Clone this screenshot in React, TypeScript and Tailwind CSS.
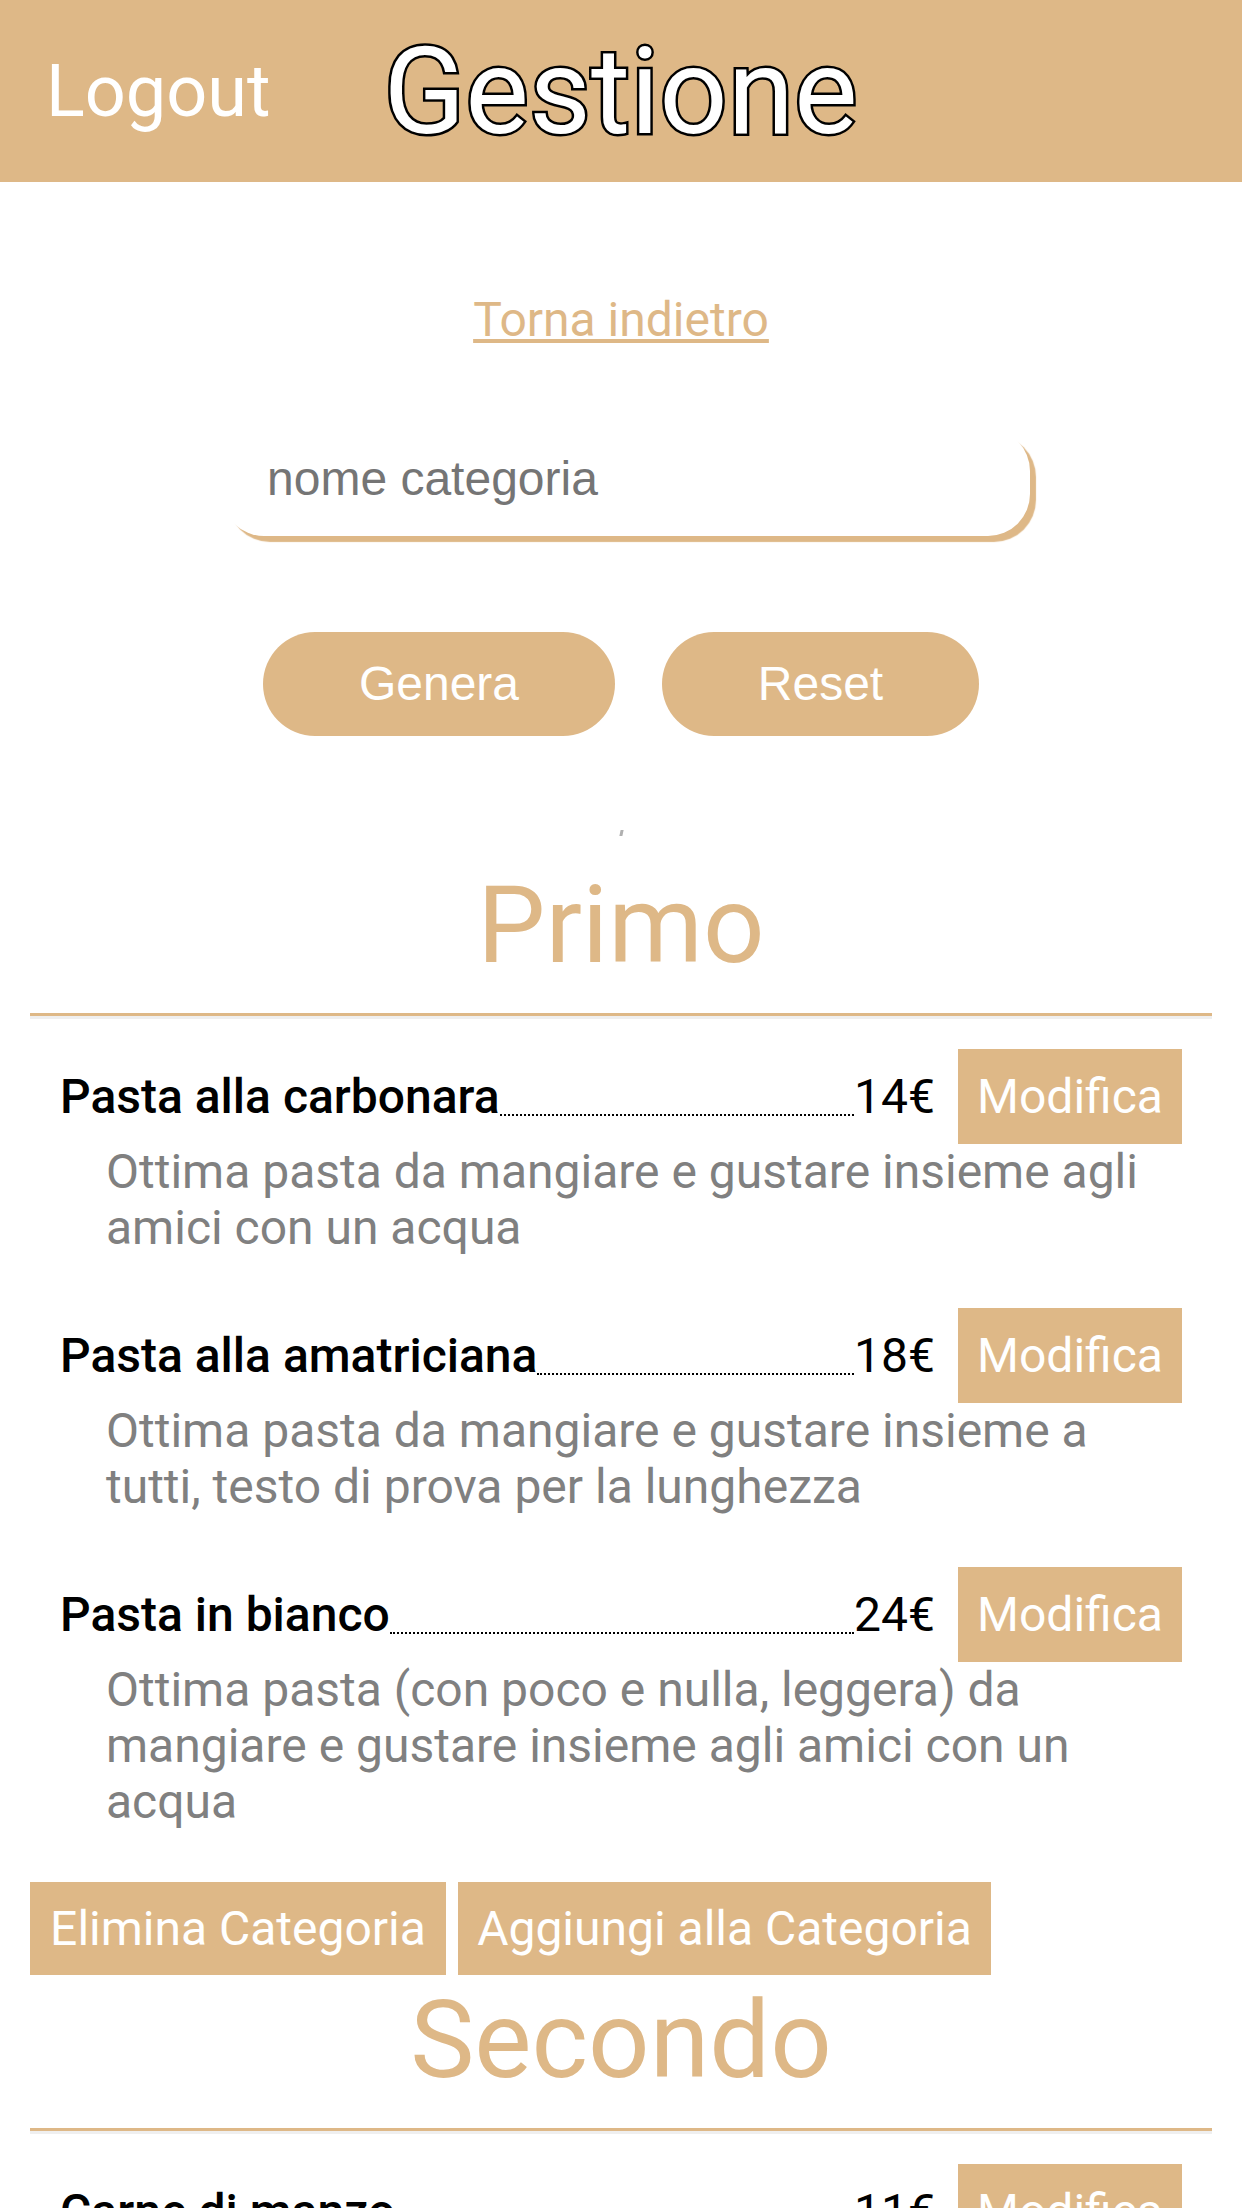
import React from "react";

type Item = { name: string; price: string; desc: string };

const primi: Item[] = [
  {
    name: "Pasta alla carbonara",
    price: "14€",
    desc: "Ottima pasta da mangiare e gustare insieme agli amici con un acqua",
  },
  {
    name: "Pasta alla amatriciana",
    price: "18€",
    desc: "Ottima pasta da mangiare e gustare insieme a tutti, testo di prova per la lunghezza",
  },
  {
    name: "Pasta in bianco",
    price: "24€",
    desc: "Ottima pasta (con poco e nulla, leggera) da mangiare e gustare insieme agli amici con un acqua",
  },
];

const secondi: Item[] = [
  {
    name: "Carne di manzo",
    price: "11€",
    desc: "Ottima carne da mangiare e gustare insieme agli amici con un acqua",
  },
];

function MenuItem({ item }: { item: Item }) {
  return (
    <div className="mb-[52px] px-[30px]">
      <div className="flex items-center">
        <div className="flex flex-1 items-end">
          <span className="whitespace-nowrap text-[48px] font-medium leading-[56px] text-black">{item.name}</span>
          <span className="mb-[9px] flex-1 border-b-2 border-dotted border-black" />
          <span className="whitespace-nowrap text-[48px] leading-[56px] text-black">{item.price}</span>
        </div>
        <button className="ml-[23px] h-[95px] w-[224px] bg-[#deb887] text-[48px] leading-[56px] text-white">
          Modifica
        </button>
      </div>
      <p className="ml-[46px] text-[48px] leading-[56px] text-[#808080]">{item.desc}</p>
    </div>
  );
}

function Category({ title, items, first }: { title: string; items: Item[]; first?: boolean }) {
  return (
    <section>
      <h2
        className={
          (first ? "mt-0 " : "mt-[2px] ") +
          "text-center text-[108px] leading-[127px] font-normal text-[#deb887]"
        }
      >
        {title}
      </h2>
      <div className="mx-[30px] mt-[24px]">
        <div className="h-[3px] bg-[#deb887]" />
        <div className="h-[3px] bg-[#efefef]" />
      </div>
      <div className="mx-[30px] pt-[30px]">
        {items.map((it) => (
          <MenuItem key={it.name} item={it} />
        ))}
        <div className="mt-[2px] flex gap-[12px]">
          <button className="h-[93px] w-[416px] bg-[#deb887] text-[48px] leading-[56px] text-white">
            Elimina Categoria
          </button>
          <button className="h-[93px] w-[533px] bg-[#deb887] text-[48px] leading-[56px] text-white">
            Aggiungi alla Categoria
          </button>
        </div>
      </div>
    </section>
  );
}

export default function App() {
  return (
    <div className="min-h-[2208px] w-[1242px] bg-white font-[Roboto,sans-serif]">
      <header className="flex h-[182px] items-start bg-[#deb887]">
        <span className="ml-[46px] mt-[50px] text-[72px] leading-[84px] text-white">Logout</span>
        <h1 className="ml-[113px] mt-[22px] text-[120px] leading-[141px] font-normal text-white [-webkit-text-stroke:5px_black] [paint-order:stroke_fill]">
          Gestione
        </h1>
      </header>

      <div className="mt-[110px] text-center">
        <a className="text-[48px] leading-[56px] text-[#deb887] underline decoration-[#deb887]">
          Torna indietro
        </a>
      </div>

      <input
        placeholder="nome categoria"
        className="ml-[222px] mt-[81px] block h-[107px] w-[808px] rounded-[42px] bg-white pb-[8px] pl-[45px] font-['Liberation_Sans',Arial,sans-serif] text-[48px] text-black shadow-[6px_6px_1px_#deb887] outline-none placeholder:text-[#757575]"
      />

      <div className="mt-[96px] flex justify-center gap-[47px] font-['Liberation_Sans',Arial,sans-serif]">
        <button className="h-[104px] w-[352px] rounded-full bg-[#deb887] text-[48px] text-white">
          Genera
        </button>
        <button className="h-[104px] w-[317px] rounded-full bg-[#deb887] text-[48px] text-white">
          Reset
        </button>
      </div>

      <div className="h-[126px] pt-[94px]">
        <div className="mx-auto h-[6px] w-[3px] -skew-x-12 bg-[#b0b0b0]" />
      </div>

      <Category title="Primo" items={primi} first />
      <Category title="Secondo" items={secondi} />
    </div>
  );
}
